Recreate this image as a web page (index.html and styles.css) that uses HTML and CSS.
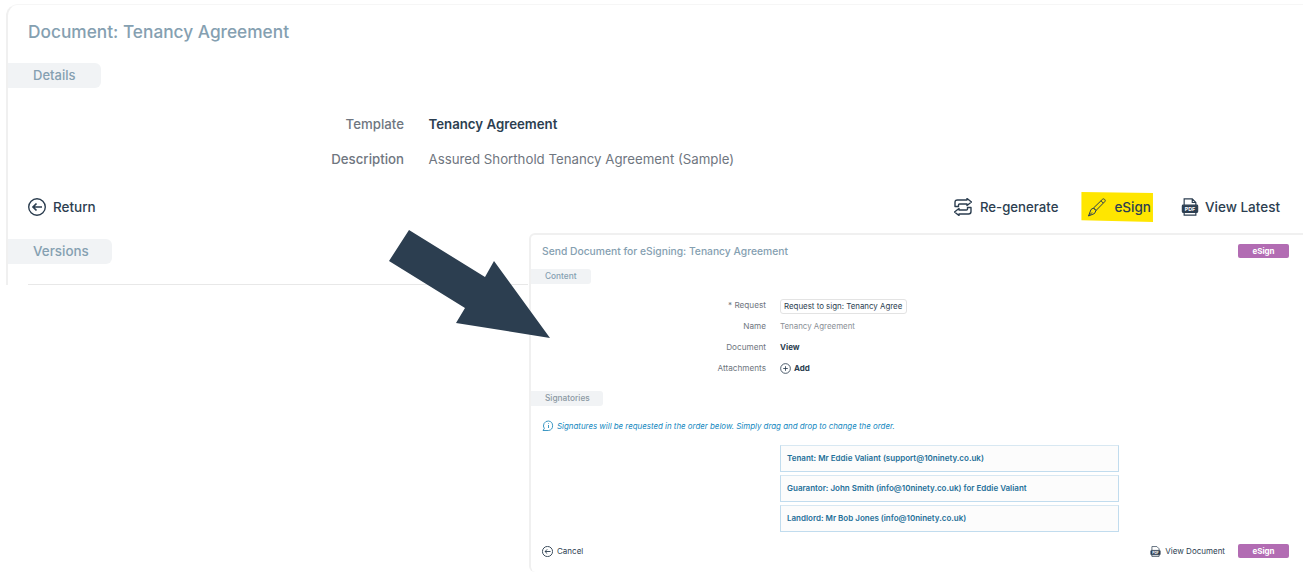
FILE: index.html
```html
<!DOCTYPE html>
<html lang="en">
<head>
<meta charset="utf-8">
<title>Document: Tenancy Agreement</title>
<link rel="stylesheet" href="styles.css">
</head>
<body>
<main class="panel">
  <h1 class="title">Document: Tenancy Agreement</h1>
  <div class="tab tab-details">Details</div>
  <dl class="fields">
    <dt>Template</dt><dd class="strong">Tenancy Agreement</dd>
    <dt>Description</dt><dd>Assured Shorthold Tenancy Agreement (Sample)</dd>
  </dl>
  <div class="actions">
    <a class="action">
      <svg class="ic" viewBox="1 1 18 18" fill="none" stroke="#2c3e50" stroke-width="1.4"><circle cx="10" cy="10" r="8.300"/><path d="M15 10H6M9.500 6.500 6 10l3.500 3.500" stroke-width="1.700"/></svg>
      Return
    </a>
    <div class="action-group">
      <a class="action action-regen">
        <svg class="ic" viewBox="1 1 18 18" fill="none" stroke="#2c3e50" stroke-width="1.400" stroke-linejoin="round"><path d="M2 9.500V5.500Q2 3 4.500 3H14V1.500L18.500 5 14 8.500V7H6.500Q5.500 7 5.500 8v1.500zM18 10.500v4Q18 17 15.500 17H6v1.500L1.500 15 6 11.500V13h7.500q1 0 1-1v-1.500z"/></svg>
        Re-generate
      </a>
      <a class="action highlight">
        <svg class="ic-pen" viewBox="0 0 20 20" fill="none" stroke="#2c3e50" stroke-width="1" stroke-linejoin="round"><path d="M6.500 11 15.500 2.300a1.500 1.500 0 0 1 2 0l.3.3a1.500 1.500 0 0 1 0 2L9 13.500M14 3.800l2.300 2.300M6.500 11l2.500 2.500"/><path d="M6.500 11 4 12.500 1.500 19 7.500 16.500 9 13.500zM1.500 19 5 15.500"/></svg>
        eSign
      </a>
      <a class="action action-pdf">
        <svg class="ic" viewBox="1 0 18 20" fill="none" stroke="#2c3e50" stroke-width="1.300"><path d="M3.500 8V1H12.500L16.500 5V8M12.500 1V5h4M3.500 16v3h13V16"/><rect x="1.500" y="8" width="17" height="8" rx="1" fill="#2c3e50"/><text x="10" y="14.300" class="pdf-mark">PDF</text></svg>
        View Latest
      </a>
    </div>
  </div>
  <div class="tab tab-versions">Versions</div>
  <div class="rule"></div>
</main>

<section class="dialog">
  <header class="dialog-head">
    <h2 class="dialog-title">Send Document for eSigning: Tenancy Agreement</h2>
    <span class="btn">eSign</span>
  </header>
  <div class="subtab subtab-content">Content</div>
  <dl class="dialog-fields">
    <dt>* Request</dt><dd><span class="input">Request to sign: Tenancy Agree</span></dd>
    <dt>Name</dt><dd class="muted">Tenancy Agreement</dd>
    <dt>Document</dt><dd class="bold">View</dd>
    <dt>Attachments</dt><dd class="bold add"><svg class="ic-s" viewBox="0 0 12 12" fill="none" stroke="#2c3e50" stroke-width=".9"><circle cx="6" cy="6" r="5.300"/><path d="M6 3.500v5M3.500 6h5"/></svg>Add</dd>
  </dl>
  <div class="subtab subtab-sign">Signatories</div>
  <p class="note"><svg class="ic-note" viewBox="0 0 12 12" fill="none" stroke="#0e7fb5" stroke-width=".8"><path d="M6.500 1a4.800 4.800 0 0 1 0 9.500H1l1.300-2A4.800 4.800 0 0 1 6.500 1zM6.500 5v3M6.500 3.300v.7"/></svg>Signatures will be requested in the order below. Simply drag and drop to change the order.</p>
  <ul class="signers">
    <li>Tenant: Mr Eddie Valiant (support@10ninety.co.uk)</li>
    <li>Guarantor: John Smith (info@10ninety.co.uk) for Eddie Valiant</li>
    <li>Landlord: Mr Bob Jones (info@10ninety.co.uk)</li>
  </ul>
  <footer class="dialog-foot">
    <a class="small-action"><svg class="ic-s" viewBox="1 1 18 18" fill="none" stroke="#2c3e50" stroke-width="1.500"><circle cx="10" cy="10" r="8.300"/><path d="M15 10H6M9.500 6.500 6 10l3.500 3.500"/></svg>Cancel</a>
    <div class="foot-right">
      <a class="small-action"><svg class="ic-s" viewBox="1 0 18 20" fill="none" stroke="#2c3e50" stroke-width="1.300"><path d="M3.500 8V1H12.500L16.500 5V8M3.500 16v3h13V16"/><rect x="1.500" y="8" width="17" height="8" rx="1" fill="#2c3e50"/><text x="10" y="14.300" class="pdf-mark">PDF</text></svg>View Document</a>
      <span class="btn">eSign</span>
    </div>
  </footer>
</section>

<svg class="arrow" viewBox="0 0 161 108"><path d="M20 0 96 47 105 31 161 108 67 93 76 78 0 31Z" fill="#2c3e50"/></svg>
</body>
</html>
```

FILE: styles.css
```css
* { box-sizing: border-box; }
html, body { margin: 0; height: 572px; overflow: hidden; background: #fff; }
body { font-family: "Inter", "Noto Sans", sans-serif; position: relative; color: #2c3e50; }

.panel {
  margin-left: 6px; margin-top: 4px; height: 281px; overflow: hidden;
  border-left: 2px solid #f0f0f0; border-top: 1px solid #f6f6f6; border-top-left-radius: 12px;
  padding-top: 15px;
}
.title { margin: 0 0 0 20px; font-size: 17.300px; line-height: 24px; font-weight: 500; color: #85a0b1; }
.tab {
  background: #f1f3f5; color: #85a0b1; font-size: 13px; font-weight: 500;
  height: 25px; line-height: 25px; padding-left: 25px; border-radius: 0 6px 6px 0;
}
.tab-details { width: 93px; margin-top: 19px; }
.tab-versions { width: 104px; margin-top: 19px; font-size: 13.400px; }
.fields {
  display: grid; grid-template-columns: 396px 1fr; column-gap: 24.500px; row-gap: 15px;
  margin: 26px 0 0; font-size: 13.250px; line-height: 20px;
}
.fields dt { text-align: right; color: #6f7680; font-weight: 500; }
.fields dd { margin: 0; color: #6f7680; }
.fields dd.strong { color: #2c3e50; font-weight: 600; }
.actions { display: flex; justify-content: space-between; align-items: center; margin: 25px 23px 0 20px; height: 26px; }
.action-group { display: flex; align-items: center; gap: 23px; }
.action { display: flex; align-items: center; gap: 7px; font-size: 13.500px; font-weight: 500; color: #2c3e50; }
.action-regen { font-size: 13.200px; gap: 8px; }
.action-pdf { margin-left: 5px; gap: 6px; }
.ic { width: 18px; height: 18px; flex: none; }
.ic-pen { width: 20px; height: 20px; flex: none; }
.highlight { background: #ffe600; height: 30px; padding: 0 2px 0 6px; gap: 7px; clip-path: polygon(0 0, 100% 3%, 100% 100%, 0 94%); }
.pdf-mark { fill: #fff; font-size: 6px; font-weight: 700; text-anchor: middle; stroke: none; }
.rule { height: 1px; background: #e8e8e8; margin: 20px 0 0 20px; width: 500px; }

.arrow { position: absolute; left: 389px; top: 230px; width: 161px; height: 108px; }

.dialog {
  position: absolute; left: 529px; top: 233px; width: 774px; height: 339px;
  background: #fff; border-left: 2px solid #f0f0f0; border-top: 2px solid #f0f0f0;
  border-top-left-radius: 6px; border-bottom-left-radius: 6px; padding-top: 9px; font-size: 8px;
}
.dialog-head { display: flex; justify-content: space-between; align-items: center; padding: 0 14px 0 11px; height: 14px; }
.dialog-title { margin: 0; font-size: 10.300px; font-weight: 500; color: #85a0b1; }
.btn {
  background: #b26cb3; color: #fff; font-size: 8px; font-weight: 700; width: 51px; height: 14px;
  line-height: 14px; text-align: center; border-radius: 2px;
}
.subtab { background: #f1f3f5; color: #85a0b1; height: 15px; line-height: 15px; padding-left: 14px; border-radius: 0 3px 3px 0; font-size: 8.300px; font-weight: 500; }
.subtab-content { width: 60px; margin-top: 11px; }
.subtab-sign { width: 72px; margin-top: 16px; color: #8b99a3; }
.dialog-fields {
  display: grid; grid-template-columns: 235px 1fr; grid-auto-rows: 13px; column-gap: 14px; row-gap: 8px;
  margin: 15px 0 0; line-height: 13px; color: #6f7680;
}
.dialog-fields dt { text-align: right; font-size: 8.200px; }
.dialog-fields dd { margin: 0; }
.input { display: block; border: 1px solid #e3e3e3; border-radius: 3px; padding: 0 3px; width: 127px; height: 15px; color: #2c3e50; white-space: nowrap; line-height: 13px; font-size: 7.900px; }
.muted { color: #8a8f96; font-size: 7.900px; }
.bold { font-weight: 700; color: #2c3e50; }
.add { display: flex; align-items: center; gap: 3px; }
.ic-s { width: 11px; height: 11px; flex: none; }
.note { display: flex; align-items: center; gap: 3px; margin: 14px 0 0 11px; font-style: italic; font-size: 7.900px; line-height: 12px; color: #1488c0; }
.ic-note { width: 12px; height: 12px; flex: none; }
.signers { list-style: none; margin: 13px 0 0 249px; padding: 0; display: flex; flex-direction: column; gap: 3px; width: 339px; }
.signers li { height: 27px; line-height: 25px; padding-left: 6px; border: 1px solid #c1dcee; border-top-color: #d8e8f2; background: #fcfcfc; font-weight: 600; color: #1f7099; }
.dialog-foot { display: flex; justify-content: space-between; align-items: center; margin: 12px 14px 0 11px; height: 14px; }
.foot-right { display: flex; align-items: center; gap: 13px; }
.small-action { display: flex; align-items: center; gap: 4px; color: #2c3e50; }
```
